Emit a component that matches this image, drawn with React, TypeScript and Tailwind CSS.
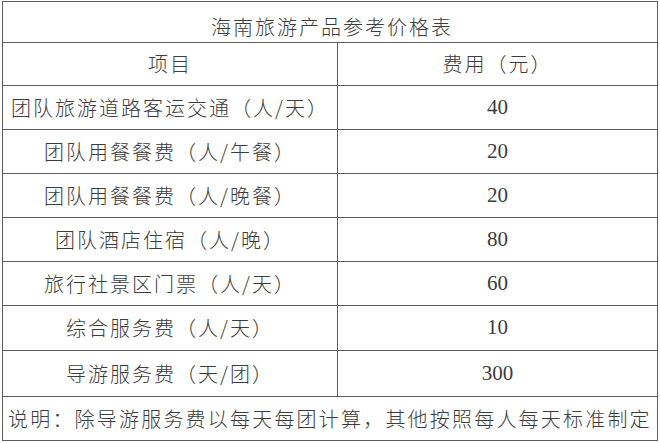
import React from 'react';

const rows = [
  { item: '团队旅游道路客运交通（人/天）', fee: '40', h: 'h-[44px]' },
  { item: '团队用餐餐费（人/午餐）', fee: '20', h: 'h-[44px]' },
  { item: '团队用餐餐费（人/晚餐）', fee: '20', h: 'h-[44px]' },
  { item: '团队酒店住宿（人/晚）', fee: '80', h: 'h-[44px]' },
  { item: '旅行社景区门票（人/天）', fee: '60', h: 'h-[44px]' },
  { item: '综合服务费（人/天）', fee: '10', h: 'h-[45px]' },
  { item: '导游服务费（天/团）', fee: '300', h: 'h-[46px]' },
];

const cjk = "font-['Noto_Sans_CJK_SC',sans-serif]";
const num = "font-['Liberation_Serif','Noto_Sans_CJK_SC',serif]";

const App: React.FC = () => {
  return (
    <div className="w-[660px] h-[443px] bg-white overflow-hidden">
      <div className={`ml-[2px] mt-[1px] w-[656px] border border-[#5c5c5c] text-[#3c3c3c] text-[20px] font-light tracking-[2px] ${cjk}`}>
        {/* Title */}
        <div className="h-[41px] border-b border-[#5c5c5c] flex items-center justify-center pt-[10px] pl-[4px]">
          海南旅游产品参考价格表
        </div>

        {/* Header */}
        <div className="h-[43px] border-b border-[#5c5c5c] grid grid-cols-[335px_1fr]">
          <div className="border-r border-[#5c5c5c] flex items-center justify-center">项目</div>
          <div className="flex items-center justify-center">费用（元）</div>
        </div>

        {rows.map((r) => (
          <div key={r.item} className={`${r.h} border-b border-[#5c5c5c] grid grid-cols-[335px_1fr]`}>
            <div className="border-r border-[#5c5c5c] flex items-center justify-center whitespace-nowrap">
              {r.item}
            </div>
            <div className={`flex items-center justify-center tracking-normal text-[21px] font-normal ${num}`}>
              {r.fee}
            </div>
          </div>
        ))}

        {/* Note */}
        <div className="h-[43px] flex items-center pl-[5px] whitespace-nowrap tracking-[2.2px]">
          说明：除导游服务费以每天每团计算，其他按照每人每天标准制定
        </div>
      </div>
    </div>
  );
};

export default App;
